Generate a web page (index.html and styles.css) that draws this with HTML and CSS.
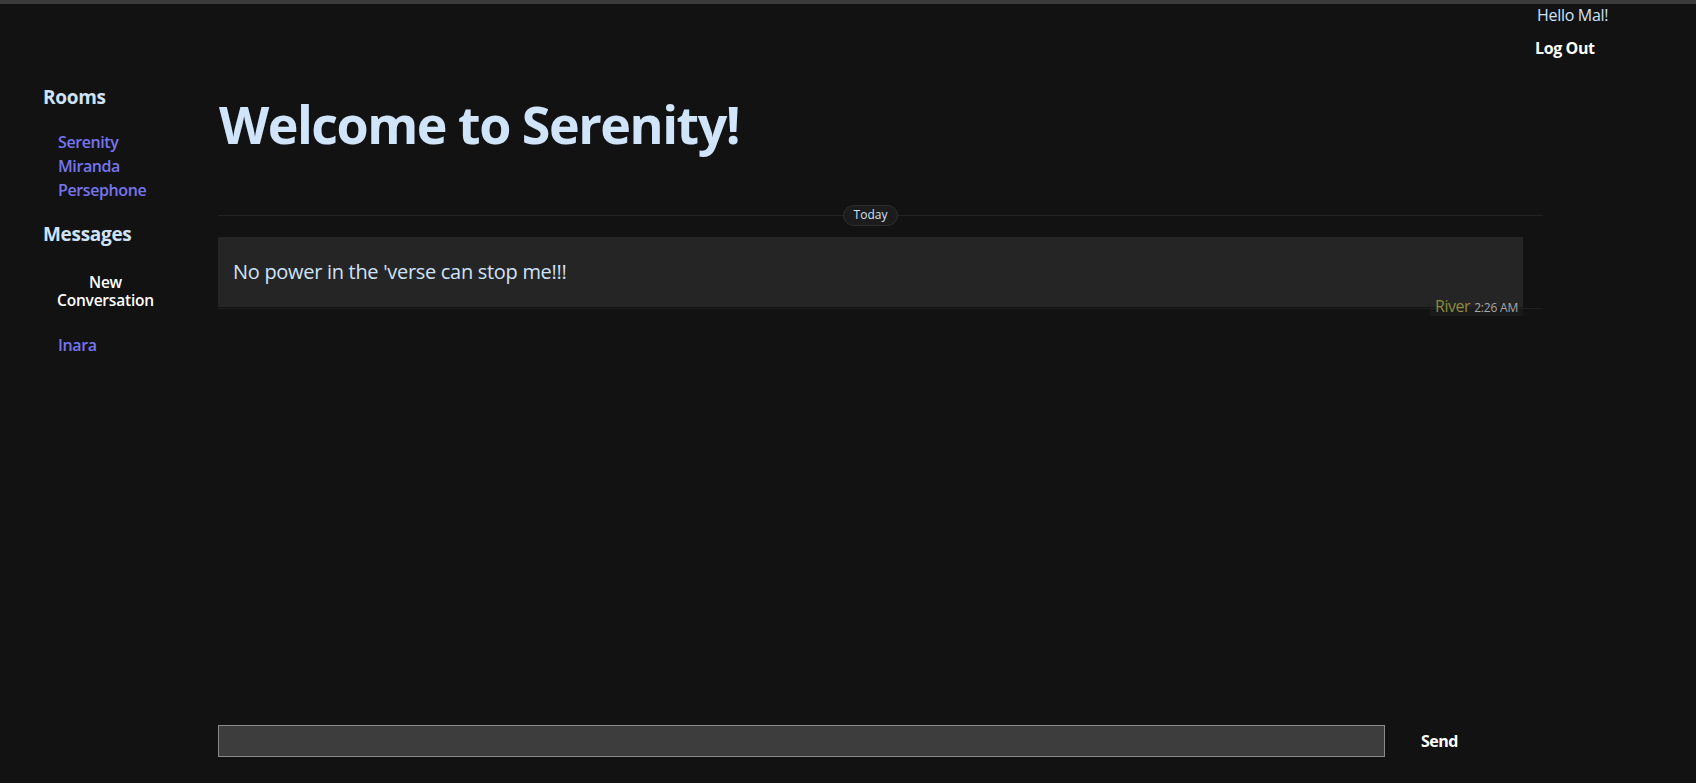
FILE: index.html
```html
<!DOCTYPE html>
<html lang="en">
<head>
<meta charset="utf-8">
<title>Serenity</title>
<link rel="stylesheet" href="styles.css">
</head>
<body>
<div class="app">
  <header class="topbar">
    <div class="user">
      <div class="hello">Hello Mal!</div>
      <button class="logout" type="button">Log Out</button>
    </div>
  </header>
  <div class="layout">
    <aside class="sidebar">
      <h2 class="side-title">Rooms</h2>
      <ul class="room-list">
        <li><a href="#">Serenity</a></li>
        <li><a href="#">Miranda</a></li>
        <li><a href="#">Persephone</a></li>
      </ul>
      <h2 class="side-title">Messages</h2>
      <button class="new-convo" type="button">New Conversation</button>
      <ul class="room-list dm-list">
        <li><a href="#">Inara</a></li>
      </ul>
    </aside>
    <main class="chat">
      <h1 class="chat-title">Welcome to Serenity!</h1>
      <div class="messages">
        <div class="day-divider"><span class="day-pill">Today</span></div>
        <div class="message-row">
          <div class="bubble">
            <p class="bubble-text">No power in the 'verse can stop me!!!</p>
            <div class="meta"><span class="author">River</span> <span class="time">2:26 AM</span></div>
          </div>
        </div>
      </div>
      <form class="composer">
        <input class="composer-input" type="text" aria-label="Message">
        <button class="send" type="button">Send</button>
      </form>
    </main>
  </div>
</div>
</body>
</html>
```
FILE: styles.css
```css
* { box-sizing: border-box; }

html, body {
  margin: 0;
  height: 100%;
}

body {
  background: #121212;
  color: #cfe3fa;
  font-family: "Open Sans", "Noto Sans", sans-serif;
  border-top: 4px solid #3c3c3c;
  overflow: hidden;
}

.app {
  height: 779px;
  display: flex;
  flex-direction: column;
}

.topbar {
  height: 66px;
  flex: none;
  display: flex;
  justify-content: flex-end;
  padding-top: 1px;
}

.user {
  width: 161px;
}

.hello {
  font-size: 16px;
  line-height: 20px;
  padding-left: 2px;
  color: #cfe3fa;
  letter-spacing: -0.3px;
}

.logout {
  display: block;
  margin-top: 13px;
  padding: 0;
  background: none;
  border: 0;
  color: #ffffff;
  font: 700 16px/20px "Open Sans", "Noto Sans", sans-serif;
  letter-spacing: -0.4px;
  cursor: pointer;
}

.layout {
  flex: 1;
  display: flex;
  min-height: 0;
}

.sidebar {
  width: 218px;
  flex: none;
  padding: 15px 50px 0 43px;
}

.side-title {
  margin: 0;
  font-size: 19px;
  line-height: 24px;
  font-weight: 700;
  color: #cfe3fa;
  letter-spacing: -0.3px;
}

.room-list {
  list-style: none;
  margin: 21px 0 20px;
  padding: 0 0 0 15px;
}

.room-list a {
  display: block;
  font-size: 16px;
  line-height: 24px;
  font-weight: 600;
  color: #7575ee;
  text-decoration: none;
  letter-spacing: -0.4px;
}

.new-convo {
  display: block;
  width: 125px;
  margin: 27px 0 0;
  padding: 0;
  background: none;
  border: 0;
  color: #ffffff;
  font: 600 15.5px/18px "Open Sans", "Noto Sans", sans-serif;
  letter-spacing: -0.2px;
  text-align: center;
  cursor: pointer;
}

.dm-list {
  margin-top: 24px;
}

.chat {
  width: 1325px;
  flex: none;
  display: flex;
  flex-direction: column;
}

.chat-title {
  margin: 22px 0 0;
  font-size: 52px;
  line-height: 64px;
  font-weight: 700;
  color: #d0e4fa;
  letter-spacing: -1.5px;
  padding-left: 1px;
}

.messages {
  flex: 1;
  padding-top: 49px;
}

.day-divider {
  display: flex;
  justify-content: center;
  align-items: center;
  padding-right: 20px;
  height: 21px;
  background: linear-gradient(#222222, #222222) 0 10px / 100% 1px no-repeat;
}

.day-pill {
  display: block;
  height: 21px;
  padding: 0 10px;
  font-size: 12px;
  line-height: 18px;
  color: #cfe3fa;
  background: #1c1c1c;
  border: 1px solid #2e2e2e;
  border-radius: 11px;
}

.message-row {
  margin-top: 11px;
  padding-bottom: 1px;
  border-bottom: 1px solid #1f1f1f;
}

.bubble {
  position: relative;
  width: 1305px;
  height: 70px;
  background: #252525;
  padding: 23px 15px;
}

.bubble-text {
  margin: 0;
  font-size: 20px;
  line-height: 24px;
  color: #cfe3fa;
  letter-spacing: -0.3px;
}

.meta {
  position: absolute;
  right: 0;
  bottom: -9px;
  height: 19px;
  padding: 0 5px;
  line-height: 19px;
  background: rgba(37, 37, 37, 0.45);
  white-space: nowrap;
}

.author {
  font-size: 16px;
  color: #8c8c3c;
  letter-spacing: -0.5px;
}

.time {
  font-size: 12px;
  color: #a8a8a8;
  letter-spacing: -0.2px;
}

.composer {
  flex: none;
  display: flex;
  align-items: center;
  height: 32px;
  margin: 0 0 26px;
}

.composer-input {
  width: 1167px;
  height: 32px;
  margin: 0;
  background: #3d3d3d;
  border: 1px solid #8a8a8a;
  color: #ffffff;
  font: 16px "Open Sans", sans-serif;
  padding: 0 8px;
}

.send {
  height: 32px;
  padding: 0 0 0 36px;
  background: none;
  border: 0;
  color: #ffffff;
  font: 700 16px/32px "Open Sans", "Noto Sans", sans-serif;
  letter-spacing: -0.5px;
  cursor: pointer;
}
```
